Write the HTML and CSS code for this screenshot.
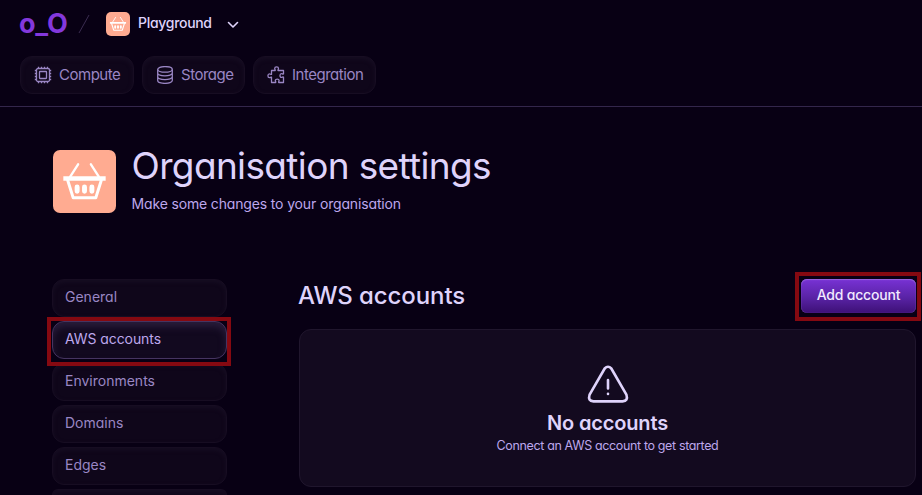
FILE: index.html
```html
<!DOCTYPE html>
<html lang="en">
<head>
<meta charset="utf-8">
<title>Organisation settings</title>
<link rel="stylesheet" href="styles.css">
</head>
<body>
<svg class="defs" aria-hidden="true">
  <symbol id="basket" viewBox="0 0 64 64">
    <g fill="none" stroke="currentColor" stroke-linecap="round" stroke-linejoin="round">
      <path stroke-width="2.4" d="M17.500 27 25.500 14.500M46.500 27 38.500 14.500"/>
      <path stroke-width="4.600" stroke-linecap="butt" d="M10.500 29H53.500"/>
      <path stroke-width="3" d="M15 31 20.500 48.500H43.500L49 31"/>
      <path stroke-width="5" d="M24.500 37.500V42M32 37.500V42M39.500 37.500V42"/>
    </g>
  </symbol>
</svg>
<header class="header">
  <div class="crumbs">
    <a class="logo">o_O</a>
    <svg class="slash" viewBox="0 0 12 20"><path d="M1 19 11 1"/></svg>
    <span class="avatar avatar-small"><svg><use href="#basket"/></svg></span>
    <span class="org-name">Playground</span>
    <svg class="chevron" viewBox="0 0 12 8"><path d="M1.500 1.500 6 6 10.500 1.500"/></svg>
  </div>
  <nav class="tabs">
    <a class="tab tab-compute">
      <svg viewBox="0 0 18 18"><rect x="2.500" y="2.500" width="13" height="13" rx="1.500"/><rect x="5.500" y="5.500" width="7" height="7" rx=".5"/><path d="M4.500 .8V2.500M7.500 .8V2.500M10.500 .8V2.500M13.500 .8V2.500M4.500 15.500V17.200M7.500 15.500V17.200M10.500 15.500V17.200M13.500 15.500V17.200M.8 4.500H2.500M.8 7.500H2.500M.8 10.500H2.500M.8 13.500H2.500M15.500 4.500H17.200M15.500 7.500H17.200M15.500 10.500H17.200M15.500 13.500H17.200"/></svg>
      <span>Compute</span>
    </a>
    <a class="tab tab-storage">
      <svg viewBox="0 0 18 18"><ellipse cx="9" cy="3.400" rx="7.300" ry="2.800"/><path d="M1.700 3.400V14.600C1.700 18.300 16.300 18.300 16.300 14.600V3.400M1.700 7.100C1.700 10.800 16.300 10.800 16.300 7.100M1.700 10.800C1.700 14.500 16.300 14.500 16.300 10.800"/></svg>
      <span>Storage</span>
    </a>
    <a class="tab tab-integration">
      <svg viewBox="0 0 18 18"><path d="M4.500 4.500H8.200C8.500 3.700 7.700 3.500 7.700 2.500C7.700 .4 11.500 .4 11.500 2.500C11.500 3.500 10.700 3.700 11 4.500H16.500V8C15.500 8.400 15.400 7.600 14.400 7.600C12.500 7.600 12.500 11.400 14.400 11.400C15.400 11.400 15.500 10.600 16.500 11V16.500H11.700C11.300 15.700 12.100 15.300 12.100 14.500C12.100 12.600 8.300 12.600 8.300 14.500C8.300 15.300 9.100 15.700 8.700 16.500H4.500V11.200C3.700 10.900 3.500 11.700 2.500 11.700C.4 11.700 .4 7.900 2.500 7.900C3.500 7.900 3.700 8.700 4.500 8.400Z"/></svg>
      <span>Integration</span>
    </a>
  </nav>
</header>
<main class="page">
  <section class="hero">
    <span class="avatar avatar-large"><svg><use href="#basket"/></svg></span>
    <div>
      <h1>Organisation settings</h1>
      <p>Make some changes to your organisation</p>
    </div>
  </section>
  <div class="columns">
    <nav class="side">
      <a class="item">General</a>
      <a class="item active">AWS accounts<i class="marker"></i></a>
      <a class="item">Environments</a>
      <a class="item">Domains</a>
      <a class="item">Edges</a>
      <a class="item cut"></a>
    </nav>
    <section class="content">
      <div class="content-head">
        <h2>AWS accounts</h2>
        <button class="add"><span>Add account</span><i class="marker"></i></button>
      </div>
      <div class="empty">
        <svg viewBox="0 0 42 38"><path d="M17.700 3.500 2.600 29.700Q.5 36 6.500 36.400H35.500Q41.500 36 39.400 29.700L24.300 3.500Q21-.1 17.700 3.500Z"/><path d="M21 15V23.500M21 28.800V29"/></svg>
        <h3>No accounts</h3>
        <p>Connect an AWS account to get started</p>
      </div>
    </section>
  </div>
</main>
</body>
</html>
```

FILE: styles.css
```css
* { box-sizing: border-box; }
body {
  margin: 0;
  height: 495px;
  overflow: hidden;
  background: #080014;
  color: #dfd3fb;
  font-family: Inter, "Liberation Sans", sans-serif;
  font-feature-settings: "cv11" 1;
  white-space: nowrap;
}
h1, h2, h3, p { margin: 0; }
.defs { position: absolute; width: 0; height: 0; }
.header { height: 107px; border-bottom: 1px solid #33264b; padding: 8px 20px 0; }
.crumbs { display: flex; align-items: center; height: 32px; }
.logo { width: 50px; margin-left: -1px; color: #8338dc; font-size: 27px; font-weight: 700; line-height: 30px; letter-spacing: -.2px; }
.slash { width: 12px; height: 20px; margin-left: 9px; fill: none; stroke: #3a2c50; }
.avatar { display: block; flex: none; background: #ffab91; color: #fff; }
.avatar svg { display: block; width: 100%; height: 100%; }
.avatar-small { width: 24px; height: 24px; border-radius: 5px; margin-left: 16px; }
.org-name { width: 74px; margin: -2px 0 0 8px; font-size: 14px; font-weight: 500; line-height: 30px; letter-spacing: -.3px; }
.chevron { width: 12px; height: 8px; margin: 2px 0 0 15px; fill: none; stroke: #dfd3fb; stroke-width: 1.6; stroke-linecap: round; stroke-linejoin: round; }
.tabs { display: flex; gap: 8px; margin-top: 16px; }
.tab {
  display: flex; align-items: center; gap: 7px; height: 38px; padding: 0 0 0 13px;
  border: 1px solid #170d22; border-radius: 12px; background: #0f061a;
  box-shadow: inset 0 2px 4px #170e23;
  color: #9a86c4; font-size: 15px; letter-spacing: -.48px;
}
.tab svg { width: 18px; height: 18px; fill: none; stroke: currentColor; stroke-width: 1.3; stroke-linejoin: round; }
.tab span { padding-bottom: 2px; }
.tab-compute { width: 114px; }
.tab-storage { width: 103px; }
.tab-integration { width: 123px; }
.page { height: 388px; overflow: hidden; padding: 42px 6px 0 52px; }
.hero { display: flex; gap: 16px; height: 130px; }
.avatar-large { width: 63px; height: 63px; border-radius: 7px; margin: .5px 0 0 .5px; }
h1 { font-size: 37px; font-weight: 400; line-height: 34px; letter-spacing: -.64px; }
.hero p { margin-top: 11px; font-size: 14px; line-height: 20px; letter-spacing: -.15px; color: #bda7ec; }
.columns { display: flex; gap: 72px; height: 216px; }
.side { display: flex; flex: none; flex-direction: column; gap: 4px; width: 175px; }
.item {
  position: relative; display: block; flex: none; height: 38px; padding-left: 12px;
  border: 1px solid #170d22; border-radius: 12px; background: #0f061a;
  box-shadow: inset 0 2px 4px #170e23;
  color: #9a86c4; font-size: 14px; line-height: 34px;
}
.item.active { border-color: #463461; background: #12091f; box-shadow: inset 0 5px 7px #281c3a; color: #bda7ec; letter-spacing: -.08px; z-index: 1; }
.item.cut { height: 6px; border-bottom: 0; border-radius: 12px 12px 0 0; }
.marker { position: absolute; inset: -5px -5px -8px -6px; border: 4px solid #850911; }
.content { flex: 1; }
.content-head { display: flex; justify-content: space-between; height: 50px; }
h2 { margin-left: -1px; font-size: 24px; font-weight: 500; line-height: 33px; letter-spacing: -.1px; }
.add {
  position: relative; width: 115px; height: 34px; padding: 0 0 3px; border: 0; border-radius: 6px;
  background: linear-gradient(#7832d5, #5923a5 55%, #3d1076);
  box-shadow: inset 0 1px 1px #9766df, inset 0 0 1px #8055b8;
  color: #f1e9ff; font: 500 14px Inter, sans-serif; font-feature-settings: "cv11" 1; letter-spacing: -.2px;
}
.add .marker { inset: -7px -5px -8px -6px; }
.empty {
  display: flex; flex-direction: column; align-items: center; height: 158px; padding-top: 35px;
  border: 1px solid #20162d; border-radius: 12px; background: #130a1f;
}
.empty svg { width: 42px; height: 38px; fill: none; stroke: #dfd3fb; stroke-width: 2.600; stroke-linecap: round; stroke-linejoin: round; }
h3 { margin-top: 6px; font-size: 20px; font-weight: 600; line-height: 28px; letter-spacing: -.15px; }
.empty p { font-size: 12.500px; line-height: 18px; letter-spacing: -.36px; color: #bda7ec; }
```
